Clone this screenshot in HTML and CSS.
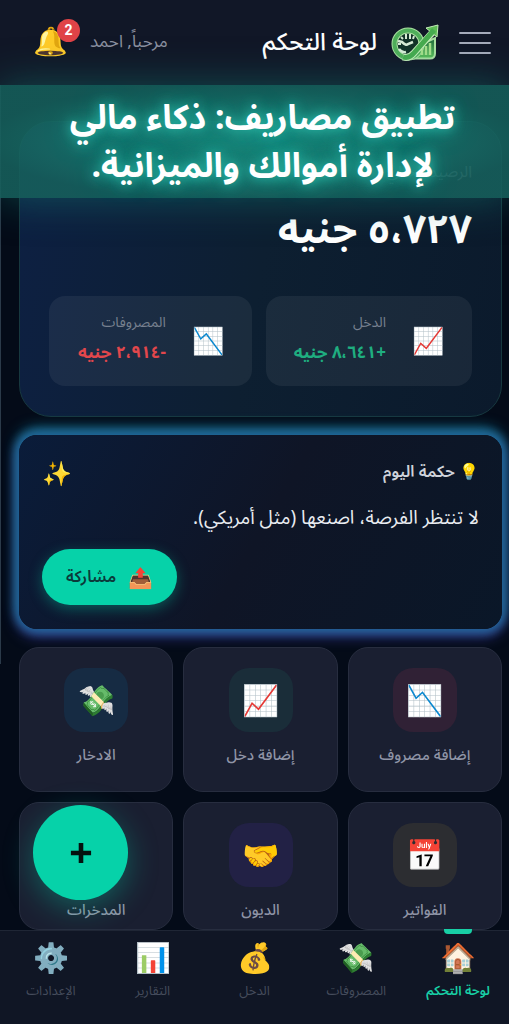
FILE: index.html
```
<!DOCTYPE html>
<html lang="ar" dir="rtl">
<head>
    <meta charset="UTF-8">
    <meta name="viewport" content="width=device-width, initial-scale=1.0">
    <title>لوحة التحكم</title>
    <link rel="stylesheet" href="styles.css">
</head>
<body>
    <header class="header">
        <button class="menu-btn" aria-label="القائمة">
            <span></span>
            <span></span>
            <span></span>
        </button>
        <svg class="logo" viewBox="0 0 48 38" aria-hidden="true">
            <defs>
                <linearGradient id="green" x1="0" y1="0" x2="0" y2="1">
                    <stop offset="0" stop-color="#1f6a3c"/>
                    <stop offset="1" stop-color="#5cc05c"/>
                </linearGradient>
            </defs>
            <path d="M20 34.500h19q5 0 5-5V14L31 20z" fill="url(#green)" stroke="#a9dfa0" stroke-width="2"/>
            <circle cx="17" cy="20" r="13.500" fill="#123328" stroke="#a9dfa0" stroke-width="6"/>
            <circle cx="17" cy="20" r="13.500" fill="none" stroke="#4fae5a" stroke-width="4"/>
            <path d="M15 10v5M19 10v5M23 12l-1 3M7 20h3M10 13l2 2" stroke="#d7ecd6" stroke-width="2"/>
            <path d="M7 17l4 1q4 4 6 2l5-2M8 25q3 4 7 3" fill="none" stroke="#d7ecd6" stroke-width="2.500"/>
            <path d="M31 31v-6M35 31v-9M39 31V19" stroke="#a5e08a" stroke-width="2.500"/>
            <path d="M12 33q6 2 11-4L41 9" fill="none" stroke="#c3edb8" stroke-width="7"/>
            <path d="M35 4l12-3-1 12z" fill="#5dbb55" stroke="#c3edb8"/>
            <path d="M12 33q6 2 11-4L43 6" fill="none" stroke="#46ab4f" stroke-width="5"/>
        </svg>
        <h1 class="title">لوحة التحكم</h1>
        <span class="welcome">مرحباً, احمد</span>
        <button class="bell" aria-label="الإشعارات">🔔<span class="badge">2</span></button>
    </header>

    <main class="content">
        <section class="balance">
            <p class="balance-label">الرصيد الحالي</p>
            <p class="balance-amount">٥،٧٢٧ جنيه</p>
            <div class="stats">
                <div class="stat">
                    <span class="stat-icon">📈</span>
                    <div>
                        <p class="stat-label">الدخل</p>
                        <p class="stat-value income">+٨،٦٤١ جنيه</p>
                    </div>
                </div>
                <div class="stat">
                    <span class="stat-icon">📉</span>
                    <div>
                        <p class="stat-label">المصروفات</p>
                        <p class="stat-value expense">-٢،٩١٤ جنيه</p>
                    </div>
                </div>
            </div>
        </section>

        <section class="wisdom">
            <div class="wisdom-head">
                <h2>💡 حكمة اليوم</h2>
                <span class="sparkles">✨</span>
            </div>
            <p class="quote">لا تنتظر الفرصة، اصنعها (مثل أمريكي).</p>
            <button class="share"><span class="share-icon">📤</span>مشاركة</button>
        </section>

        <section class="tiles">
            <button class="tile"><span class="tile-icon red">📉</span>إضافة مصروف</button>
            <button class="tile"><span class="tile-icon green">📈</span>إضافة دخل</button>
            <button class="tile"><span class="tile-icon blue">💸</span>الادخار</button>
            <button class="tile"><span class="tile-icon amber">📅</span>الفواتير</button>
            <button class="tile"><span class="tile-icon violet">🤝</span>الديون</button>
            <button class="tile"><span class="tile-icon"></span>المدخرات</button>
        </section>
    </main>

    <div class="scrollbar"></div>
    <p class="banner">تطبيق مصاريف: ذكاء مالي<br>لإدارة أموالك والميزانية.</p>
    <button class="fab" aria-label="إضافة">
        <svg viewBox="0 0 24 24" width="22" height="22"><path d="M12 1v22M1 12h22" stroke="#04110f" stroke-width="5"/></svg>
    </button>

    <nav class="nav">
        <a class="nav-item active" href="#"><span class="nav-icon">🏠</span>لوحة التحكم</a>
        <a class="nav-item" href="#"><span class="nav-icon">💸</span>المصروفات</a>
        <a class="nav-item" href="#"><span class="nav-icon">💰</span>الدخل</a>
        <a class="nav-item" href="#"><span class="nav-icon">📊</span>التقارير</a>
        <a class="nav-item" href="#"><span class="nav-icon">⚙️</span>الإعدادات</a>
    </nav>
</body>
</html>
```
FILE: styles.css
```
* {
    box-sizing: border-box;
    margin: 0;
    padding: 0;
}

body {
    display: flex;
    flex-direction: column;
    height: 100vh;
    overflow: hidden;
    position: relative;
    background-color: #040b18;
    color: #ffffff;
    font-family: "Noto Sans", "Noto Sans Arabic", sans-serif;
}

button {
    border: none;
    background: none;
    color: inherit;
    font-family: inherit;
    cursor: pointer;
}

/* header */
.header {
    display: flex;
    align-items: center;
    height: 85px;
    padding: 0 18px 0 30px;
    background-color: #111727;
}

.menu-btn {
    display: flex;
    flex-direction: column;
    gap: 8px;
    width: 32px;
}

.menu-btn span {
    height: 2px;
    border-radius: 1px;
    background-color: #a5abbb;
}

.logo {
    width: 48px;
    height: 38px;
    margin: 0 20px 0 14px;
}

.title {
    font-size: 24px;
    font-weight: 500;
    line-height: 40px;
    padding-bottom: 4px;
}

.welcome {
    margin-right: auto;
    color: #8b90a0;
    font-size: 17px;
    padding-bottom: 2px;
}

.bell {
    position: relative;
    margin-right: 20px;
    width: 40px;
    height: 40px;
    padding-bottom: 6px;
    font-size: 28px;
    line-height: 34px;
}

.badge {
    position: absolute;
    top: -4px;
    right: -10px;
    width: 23px;
    height: 23px;
    border-radius: 50%;
    background-color: #e04347;
    font-family: Roboto, sans-serif;
    font-size: 14px;
    font-weight: 700;
    line-height: 23px;
}

/* promo text over the page */
.banner {
    position: absolute;
    top: 85px;
    left: 0;
    right: 0;
    padding: 7px 0 10px 16px;
    background: radial-gradient(ellipse at center, rgba(27, 142, 127, 0.9), rgba(22, 96, 92, 0.88) 75%);
    box-shadow: 0 0 40px rgba(20, 130, 120, 0.5);
    font-size: 34px;
    font-weight: 700;
    line-height: 48px;
    text-align: center;
    text-shadow: 0 0 12px #2fc4b2, 0 0 24px #1fa897;
}

.scrollbar {
    position: absolute;
    top: 85px;
    left: 0;
    width: 1px;
    height: 579px;
    background-color: #2b3a49;
}

/* content */
.content {
    display: flex;
    flex-direction: column;
    gap: 18px;
    flex: 1;
    min-height: 0;
    padding: 36px 7px 0 19px;
}

.balance {
    padding: 36px 29px 30px;
    border: 1px solid #17383f;
    border-radius: 32px;
    background: linear-gradient(100deg, #0d2043, #0d1f31 50%, #0b1a2c);
}

.balance-label {
    color: #7c8796;
    font-size: 16px;
    line-height: 26px;
}

.balance-amount {
    margin: 20px 0 44px;
    font-size: 40px;
    font-weight: 700;
    line-height: 48px;
}

.stats {
    display: flex;
    gap: 14px;
}

.stat {
    display: flex;
    align-items: center;
    gap: 26px;
    flex: 1;
    height: 90px;
    padding: 0 28px 6px;
    border-radius: 16px;
    background-color: rgba(255, 255, 255, 0.06);
}

.stat-icon {
    padding-top: 4px;
    font-size: 26px;
    line-height: 32px;
}

.stat-label {
    color: #77808f;
    font-size: 14px;
    line-height: 28px;
}

.stat-value {
    font-size: 17px;
    font-weight: 700;
    line-height: 32px;
    white-space: nowrap;
}

.income {
    color: #1fae80;
}

.expense {
    color: #e2474c;
}

.wisdom {
    display: flex;
    flex-direction: column;
    padding: 20px 23px 24px;
    border-radius: 18px;
    background: linear-gradient(120deg, #0a1c3a, #0f1526 50%, #0a1728);
    box-shadow: 0 0 10px 3px #23649a, 0 -5px 14px 2px #14708a, 0 5px 14px 2px #3a3c92;
}

.wisdom-head {
    display: flex;
    align-items: center;
    justify-content: space-between;
    height: 34px;
}

.wisdom-head h2 {
    color: #cfd3db;
    font-size: 16px;
    font-weight: 600;
}

.sparkles {
    font-size: 24px;
}

.quote {
    margin: 12px 0 16px;
    color: #e8ebf0;
    font-size: 19px;
    line-height: 32px;
}

.share {
    display: flex;
    align-items: center;
    gap: 12px;
    align-self: flex-end;
    height: 56px;
    padding: 0 24px;
    border-radius: 28px;
    background-color: #06d2a9;
    box-shadow: 0 4px 14px rgba(6, 210, 169, 0.35);
    color: #0b3a3a;
    font-size: 16px;
    font-weight: 600;
}

.share-icon {
    font-size: 20px;
}

.tiles {
    display: grid;
    grid-template-columns: repeat(3, 1fr);
    grid-template-rows: 145px 1fr;
    gap: 10px;
    flex: 1;
    min-height: 0;
}

.tile {
    display: flex;
    flex-direction: column;
    align-items: center;
    gap: 8px;
    min-height: 0;
    padding-top: 20px;
    border: 1px solid #272d3f;
    border-radius: 20px;
    background-color: #1a1f31;
    color: #8f94a6;
    font-size: 15px;
    font-weight: 500;
    line-height: 28px;
}

.tile-icon {
    flex-shrink: 0;
    width: 64px;
    height: 64px;
    border-radius: 20px;
    font-size: 30px;
    line-height: 64px;
}

.red {
    background-color: #302135;
}

.green {
    background-color: #1a2d39;
}

.blue {
    background-color: #162b43;
}

.amber {
    background-color: #2c2d31;
}

.violet {
    background-color: #222145;
}

.fab {
    position: absolute;
    left: 33px;
    bottom: 124px;
    width: 95px;
    height: 95px;
    border-radius: 50%;
    background-color: #06d2a9;
    box-shadow: 0 8px 30px rgba(6, 210, 169, 0.35);
}

.fab svg {
    display: block;
    margin: auto;
}

/* bottom bar */
.nav {
    position: relative;
    display: flex;
    height: 94px;
    border-top: 1px solid #1f2635;
    background-color: #101625;
}

.nav-item {
    position: relative;
    display: flex;
    flex-direction: column;
    align-items: center;
    flex: 1;
    padding-top: 6px;
    color: #454c5c;
    font-size: 13px;
    line-height: 26px;
    text-decoration: none;
    white-space: nowrap;
}

.nav-icon {
    font-size: 29px;
    line-height: 40px;
}

.active {
    color: #18cfa5;
    font-weight: 600;
}

.active::before {
    content: "";
    position: absolute;
    top: -2px;
    width: 28px;
    height: 5px;
    border-radius: 0 0 4px 4px;
    background-color: #18cfa5;
}
```
